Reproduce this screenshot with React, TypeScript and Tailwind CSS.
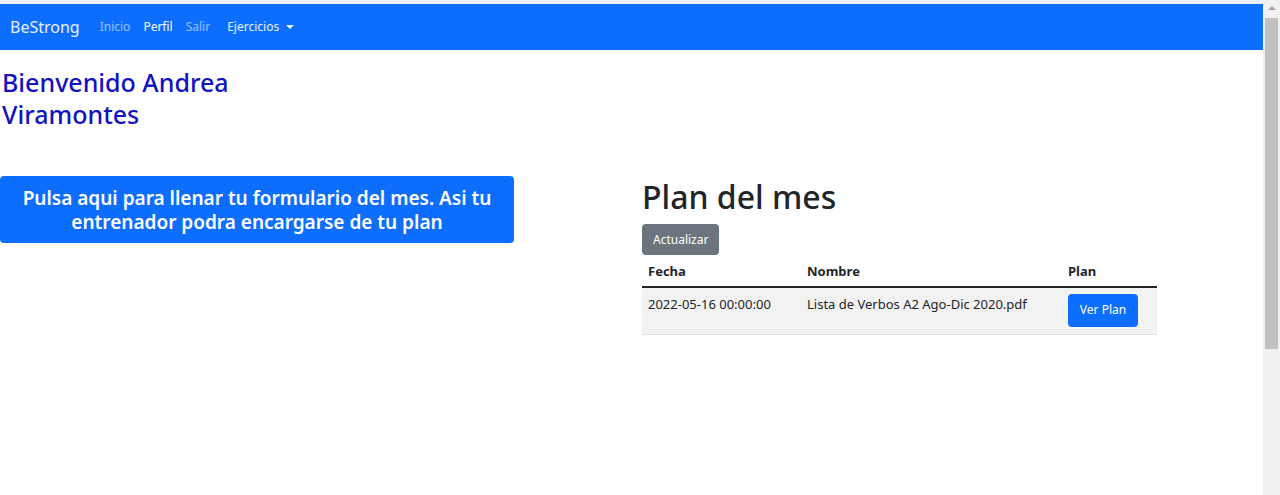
export default function App() {
  const links = [
    { label: "Inicio", active: false },
    { label: "Perfil", active: true },
    { label: "Salir", active: false },
  ];

  const planes = [
    { fecha: "2022-05-16 00:00:00", nombre: "Lista de Verbos A2 Ago-Dic 2020.pdf" },
  ];

  return (
    <div
      className="flex h-[495px] w-full overflow-hidden bg-white"
      style={{ fontFamily: '"Noto Sans", "Open Sans", Arial, sans-serif' }}
    >
      <div className="flex min-w-0 flex-1 flex-col">
        {/* top strip */}
        <div className="h-[4px] bg-[#eef0f3]" />

        {/* Navbar */}
        <nav className="flex h-[46px] items-center bg-[#0d6efd] pl-[10px]">
          <span className="mr-[20px] text-[16px] text-white/90">BeStrong</span>
          <div className="flex items-center gap-[13px] text-[12px]">
            {links.map((l) => (
              <span key={l.label} className={l.active ? "text-white" : "text-white/55"}>
                {l.label}
              </span>
            ))}
            <span className="ml-[4px] flex items-center gap-[7px] text-white/90">
              Ejercicios
              <span className="h-0 w-0 border-x-[4px] border-t-[4px] border-x-transparent border-t-white/90" />
            </span>
          </div>
        </nav>

        {/* Welcome */}
        <h1 className="mt-[16px] w-[250px] pl-[2px] text-[25px] leading-[32px] font-medium text-[#1212c2]">
          Bienvenido Andrea Viramontes
        </h1>

        <div className="mt-[46px] flex items-start">
          {/* Left column */}
          <div className="w-[514px]">
            <button className="block h-[67px] w-full rounded-[4px] bg-[#0d6efd] px-3 pt-[1px] text-center text-[19px] leading-[24px] font-semibold text-white">
              Pulsa aqui para llenar tu formulario del mes. Asi tu entrenador podra encargarse de tu plan
            </button>
          </div>

          {/* Right column */}
          <div className="ml-[128px] w-[515px]">
            <h2 className="text-[32px] leading-[42px] font-medium text-[#212529]">Plan del mes</h2>
            <button className="mt-[6px] h-[31px] rounded-[4px] bg-[#6c757d] px-[11px] text-[12px] text-white">
              Actualizar
            </button>
            <table className="mt-[3px] w-full border-collapse text-[13px] text-[#212529]">
              <thead>
                <tr className="border-b-2 border-[#212529]">
                  <th className="w-[159px] px-[6px] py-[4px] text-left font-bold">Fecha</th>
                  <th className="w-[261px] px-[6px] py-[4px] text-left font-bold">Nombre</th>
                  <th className="px-[6px] py-[4px] text-left font-bold">Plan</th>
                </tr>
              </thead>
              <tbody>
                {planes.map((p) => (
                  <tr key={p.fecha} className="border-b border-[#dee2e6] bg-[#f2f2f2]">
                    <td className="px-[6px] pt-[7px] pb-[20px] align-top">{p.fecha}</td>
                    <td className="px-[6px] pt-[7px] pb-[20px] align-top">{p.nombre}</td>
                    <td className="px-[6px] pt-[6px] pb-[6px] align-top">
                      <button className="h-[33px] w-[70px] rounded-[4px] bg-[#0d6efd] text-[12px] text-white">
                        Ver Plan
                      </button>
                    </td>
                  </tr>
                ))}
              </tbody>
            </table>
          </div>
        </div>
      </div>

      {/* Scrollbar */}
      <div className="flex w-[17px] flex-col items-center bg-[#f1f1f1] pt-[6px]">
        <span className="h-0 w-0 border-x-[4px] border-b-[4px] border-x-transparent border-b-[#a3a3a3]" />
        <div className="mt-[8px] h-[331px] w-[13px] bg-[#c1c1c1]" />
      </div>
    </div>
  );
}
